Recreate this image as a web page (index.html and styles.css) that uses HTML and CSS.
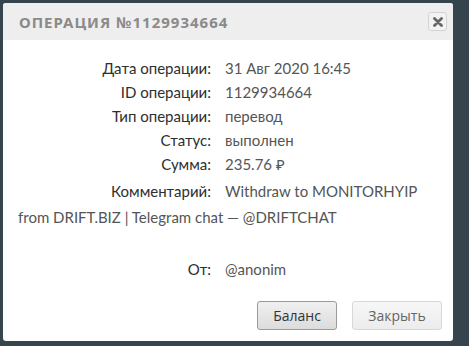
FILE: index.html
```html
<!DOCTYPE html>
<html>
<head>
    <title>Операция</title>
    <link rel="stylesheet" href="styles.css">
</head>
<body>
    <div class="modal">
        <!-- Header -->
        <div class="modal-header">
            <span class="modal-title">Операция №1129934664</span>
            <button class="close-btn">
                <svg width="10" height="10" viewBox="0 0 10 10"><path d="M1.5 1.5 L8.5 8.5 M8.5 1.5 L1.5 8.5" stroke="#666" stroke-width="2.8" stroke-linecap="round"/></svg>
            </button>
        </div>

        <!-- Operation details -->
        <div class="modal-body">
            <div class="row"><span class="label">Дата операции:</span><span class="value">31 Авг 2020 16:45</span></div>
            <div class="row"><span class="label">ID операции:</span><span class="value">1129934664</span></div>
            <div class="row"><span class="label">Тип операции:</span><span class="value">перевод</span></div>
            <div class="row"><span class="label">Статус:</span><span class="value">выполнен</span></div>
            <div class="row"><span class="label">Сумма:</span><span class="value">235.76 ₽</span></div>
            <div class="row comment"><span class="label">Комментарий:</span>Withdraw to MONITORHYIP from DRIFT.BIZ | Telegram chat — @DRIFTCHAT</div>
            <div class="row from"><span class="label">От:</span><span class="value">@anonim</span></div>
        </div>

        <!-- Buttons -->
        <div class="modal-footer">
            <button class="btn btn-primary">Баланс</button>
            <button class="btn btn-close">Закрыть</button>
        </div>
    </div>
</body>
</html>
```

FILE: styles.css
```css
body {
    margin: 0;
    padding: 3px;
    background-color: #36454d;
    font-family: Lato, "Noto Sans", sans-serif;
    height: 346px;
    box-sizing: border-box;
    overflow: hidden;
}

.modal {
    width: 450px;
    height: 338px;
    background-color: #fff;
    border-radius: 3px;
    display: flex;
    flex-direction: column;
    overflow: hidden;
}

.modal-header {
    height: 37px;
    flex: none;
    background-color: #eeeeee;
    display: flex;
    align-items: center;
    justify-content: space-between;
    padding: 0 6px 0 16px;
}

.modal-title {
    text-transform: uppercase;
    font-family: "Noto Sans", sans-serif;
    font-weight: bold;
    font-size: 15px;
    letter-spacing: 1px;
    color: #8a8a8a;
}

.close-btn {
    width: 19px;
    height: 19px;
    padding: 0;
    border: 1px solid #d4d4d4;
    border-radius: 3px;
    background-color: #f2f2f2;
    display: flex;
    align-items: center;
    justify-content: center;
}

.modal-body {
    flex: 1;
    padding: 16px 15px 0 15px;
    font-size: 15px;
    line-height: 24px;
    color: #555;
}

.row .label {
    display: inline-block;
    width: 193px;
    margin-right: 14px;
    text-align: right;
    color: #2e2e2e;
}

.comment {
    margin-top: 2px;
    line-height: 26px;
}

.from {
    margin-top: 27px;
}

.modal-footer {
    display: flex;
    justify-content: flex-end;
    gap: 15px;
    padding: 0 11px 11px 0;
}

.btn {
    height: 29px;
    padding: 0;
    font-family: "Open Sans", sans-serif;
    font-size: 14px;
    color: #666;
    border: 1px solid #d8d8d8;
    border-radius: 3px;
    background: linear-gradient(#f7f7f7, #ececec);
}

.btn-primary {
    width: 80px;
    color: #333;
    border-color: #9a9a9a;
    background: linear-gradient(#f0f0f0, #dcdcdc);
}

.btn-close {
    width: 90px;
}
```
